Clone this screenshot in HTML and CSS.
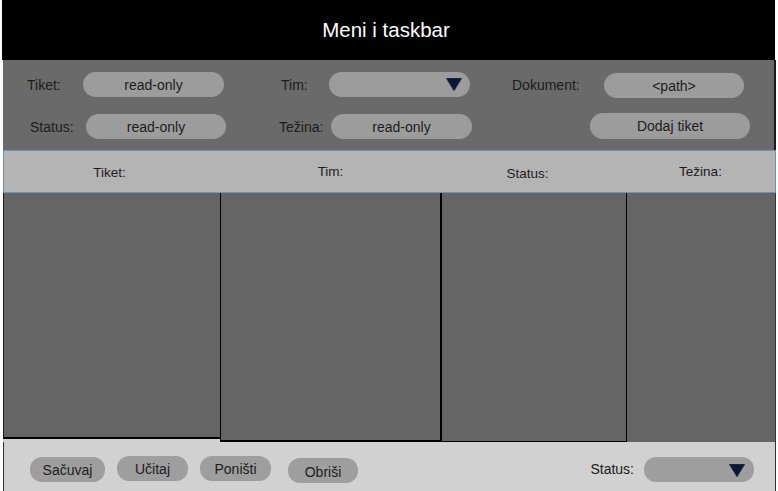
FILE: index.html
```html
<!DOCTYPE html>
<html lang="sr">
<head>
<meta charset="utf-8">
<title>Meni i taskbar</title>
<link rel="stylesheet" href="styles.css">
</head>
<body>
<div class="page">
  <header class="topbar">Meni i taskbar</header>

  <section class="form">
    <div class="row row-1">
      <span class="label l-tiket">Tiket:</span>
      <span class="pill">read-only</span>
      <span class="label l-tim">Tim:</span>
      <span class="pill select">
        <svg class="tri" width="16" height="13" viewBox="0 0 16 13"><polygon points="0,0 16,0 8,13" /></svg>
      </span>
      <span class="label l-dok">Dokument:</span>
      <span class="pill pill-path">&lt;path&gt;</span>
    </div>
    <div class="row row-2">
      <span class="label l-status">Status:</span>
      <span class="pill">read-only</span>
      <span class="label l-tezina">Težina:</span>
      <span class="pill">read-only</span>
      <span class="pill btn-add">Dodaj tiket</span>
    </div>
  </section>

  <section class="table">
    <div class="thead">
      <div class="th th-1">Tiket:</div>
      <div class="th th-2">Tim:</div>
      <div class="th th-3">Status:</div>
      <div class="th th-4">Težina:</div>
    </div>
    <div class="tbody">
      <div class="col col-1"></div>
      <div class="col col-2"></div>
      <div class="col col-3"></div>
      <div class="col col-4"></div>
    </div>
  </section>

  <footer class="bottombar">
    <div class="buttons">
      <span class="btn b-save">Sačuvaj</span>
      <span class="btn b-load">Učitaj</span>
      <span class="btn b-cancel">Poništi</span>
      <span class="btn b-delete">Obriši</span>
    </div>
    <div class="status-filter">
      <span class="label">Status:</span>
      <span class="btn select-small">
        <svg class="tri" width="16" height="13" viewBox="0 0 16 13"><polygon points="0,0 16,0 8,13" /></svg>
      </span>
    </div>
  </footer>
</div>
</body>
</html>
```

FILE: styles.css
```css
* { box-sizing: border-box; }

html, body {
  margin: 0;
  padding: 0;
  background: #ffffff;
}

body {
  font-family: "Liberation Sans", Arial, sans-serif;
  color: #1c1c1c;
  font-size: 14px;
  width: 778px;
  height: 491px;
  overflow: hidden;
}

.page {
  display: flex;
  flex-direction: column;
  width: 778px;
}

/* ---------- top bar ---------- */
.topbar {
  margin-left: 2px;
  width: 773px;
  height: 60px;
  background: #000000;
  color: #ffffff;
  font-size: 20.5px;
  display: flex;
  align-items: center;
  justify-content: center;
  padding-bottom: 1px;
  padding-right: 5px;
}

/* ---------- form panel ---------- */
.form {
  margin-left: 3px;
  width: 773px;
  height: 90px;
  background: #6a6a6a;
  border-right: 2px solid #1a1a1a;
  display: flex;
  flex-direction: column;
  padding-top: 12px;
  gap: 17px;
}

.row {
  display: flex;
  align-items: center;
  height: 25px;
}

.row-1 { padding-left: 24px; }
.row-2 { padding-left: 27px; }

.label {
  white-space: nowrap;
  color: #1c1c1c;
}

.pill {
  height: 25px;
  width: 141px;
  border-radius: 13px;
  background: #9c9c9c;
  display: flex;
  align-items: center;
  justify-content: center;
  color: #1c1c1c;
  white-space: nowrap;
}

.l-tiket { width: 56px; }
.l-tim { width: 48px; margin-left: 57px; }
.l-dok { width: 92px; margin-left: 42px; }
.pill-path { width: 140px; position: relative; top: 1px; }

.l-status { width: 56px; }
.l-tezina { width: 53px; margin-left: 52px; padding-left: 1px; }
.row-2 .pill:nth-of-type(2) { width: 140px; }
.btn-add { width: 160px; height: 26px; margin-left: 118px; position: relative; top: -1px; }

.select {
  justify-content: flex-end;
  padding-right: 8px;
}

.tri {
  display: block;
}
.tri polygon {
  fill: #0c1733;
  stroke: #2a3f6a;
  stroke-width: 0.6;
  stroke-linejoin: round;
}

/* ---------- table ---------- */
.table {
  margin-left: 3px;
  width: 773px;
  display: flex;
  flex-direction: column;
}

.thead {
  display: grid;
  grid-template-columns: 217px 220px 187px 149px;
  height: 43px;
  background: #b4b4b4;
  border: 1px solid #6f8fbf;
}

.th {
  display: flex;
  justify-content: center;
  align-items: center;
  font-size: 13.5px;
  color: #1c1c1c;
}
.th-1 { padding-top: 1px; padding-right: 6px; }
.th-2 { padding-bottom: 1px; padding-right: 1px; }
.th-3 { padding-top: 4px; padding-right: 14px; }
.th-4 { padding-bottom: 1px; padding-right: 4px; }

.tbody {
  display: grid;
  grid-template-columns: 217px 220px 187px 149px;
  align-items: start;
  height: 249px;
  background: #d1d1d1;
}

.col {
  background: #656565;
}
.col-1 {
  height: 246px;
  border-left: 1px solid #1a1a1a;
  border-bottom: 2px solid #000000;
}
.col-2 {
  height: 249px;
  border-left: 1px solid #000000;
  border-bottom: 2px solid #000000;
}
.col-3 {
  height: 249px;
  border-left: 2px solid #000000;
  border-right: 1px solid #000000;
  border-bottom: 1px solid #000000;
}
.col-4 {
  height: 249px;
  border-right: 1px solid #333333;
}

/* ---------- bottom bar ---------- */
.bottombar {
  margin-left: 3px;
  width: 773px;
  height: 49px;
  background: #d1d1d1;
  border-left: 1px solid #333333;
  border-right: 1px solid #333333;
  display: flex;
  justify-content: space-between;
  padding: 14px 21px 0 26px;
}

.buttons {
  display: flex;
  align-items: flex-start;
  gap: 12px;
}

.btn {
  height: 25px;
  border-radius: 12px;
  background: #9e9e9e;
  display: flex;
  align-items: center;
  justify-content: center;
  white-space: nowrap;
  color: #1c1c1c;
}

.b-save { width: 75px; margin-top: 1px; }
.b-load { width: 71px; }
.b-cancel { width: 71px; }
.b-delete { width: 70px; margin-left: 5px; margin-top: 2px; padding-top: 2px; }

.status-filter {
  display: flex;
  align-items: flex-start;
  gap: 10px;
  padding-top: 1px;
}

.status-filter .label {
  line-height: 25px;
}

.select-small {
  width: 110px;
  justify-content: flex-end;
  padding-right: 9px;
  padding-top: 2px;
}
```
